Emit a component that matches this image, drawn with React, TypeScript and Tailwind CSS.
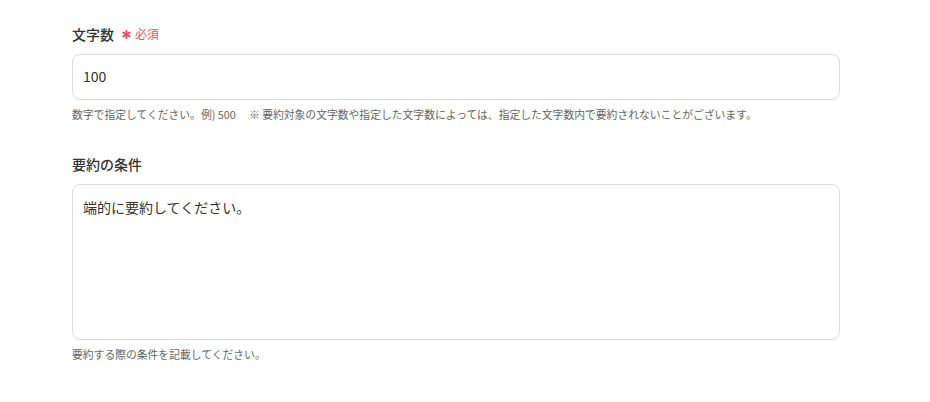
import React from 'react';

const font = { fontFamily: '"Noto Sans CJK JP", "Noto Sans", sans-serif' };

function Asterisk() {
  return (
    <svg width="9" height="9" viewBox="0 0 10 10" className="text-[#ef4d5a]">
      <g stroke="currentColor" strokeWidth="2.2" strokeLinecap="round">
        <line x1="5" y1="1" x2="5" y2="9" />
        <line x1="1.5" y1="3" x2="8.5" y2="7" />
        <line x1="1.5" y1="7" x2="8.5" y2="3" />
      </g>
    </svg>
  );
}

export default function App() {
  return (
    <div className="min-h-[402px] w-[930px] bg-white pl-[72px] pt-[24px] text-[#333]" style={font}>
      <div className="w-[768px]">
        <div className="flex items-center gap-[8px] h-[20px]">
          <span className="text-[14px] font-medium leading-[20px]">文字数</span>
          <span className="flex items-center gap-[4px] text-[12px] text-[#ef4d5a] leading-[20px]">
            <Asterisk />
            <span>必須</span>
          </span>
        </div>
        <div className="mt-[10px] h-[46px] rounded-[8px] border border-[#dcdcdc] px-[10px] pb-[2px] flex items-center text-[14px]">
          100
        </div>
        <p className="mt-[6px] text-[10.8px] leading-[16px] text-[#666]">
          数字で指定してください。例) 500　 ※ 要約対象の文字数や指定した文字数によっては、指定した文字数内で要約されないことがございます。
        </p>

        <div className="mt-[32px] h-[20px] text-[14px] font-medium leading-[20px]">要約の条件</div>
        <div className="mt-[10px] h-[156px] rounded-[8px] border border-[#dcdcdc] px-[10px] pt-[12px] text-[14px] leading-[20px]">
          端的に要約してください。
        </div>
        <p className="mt-[6px] text-[10.8px] leading-[16px] text-[#666]">要約する際の条件を記載してください。</p>
      </div>
    </div>
  );
}
